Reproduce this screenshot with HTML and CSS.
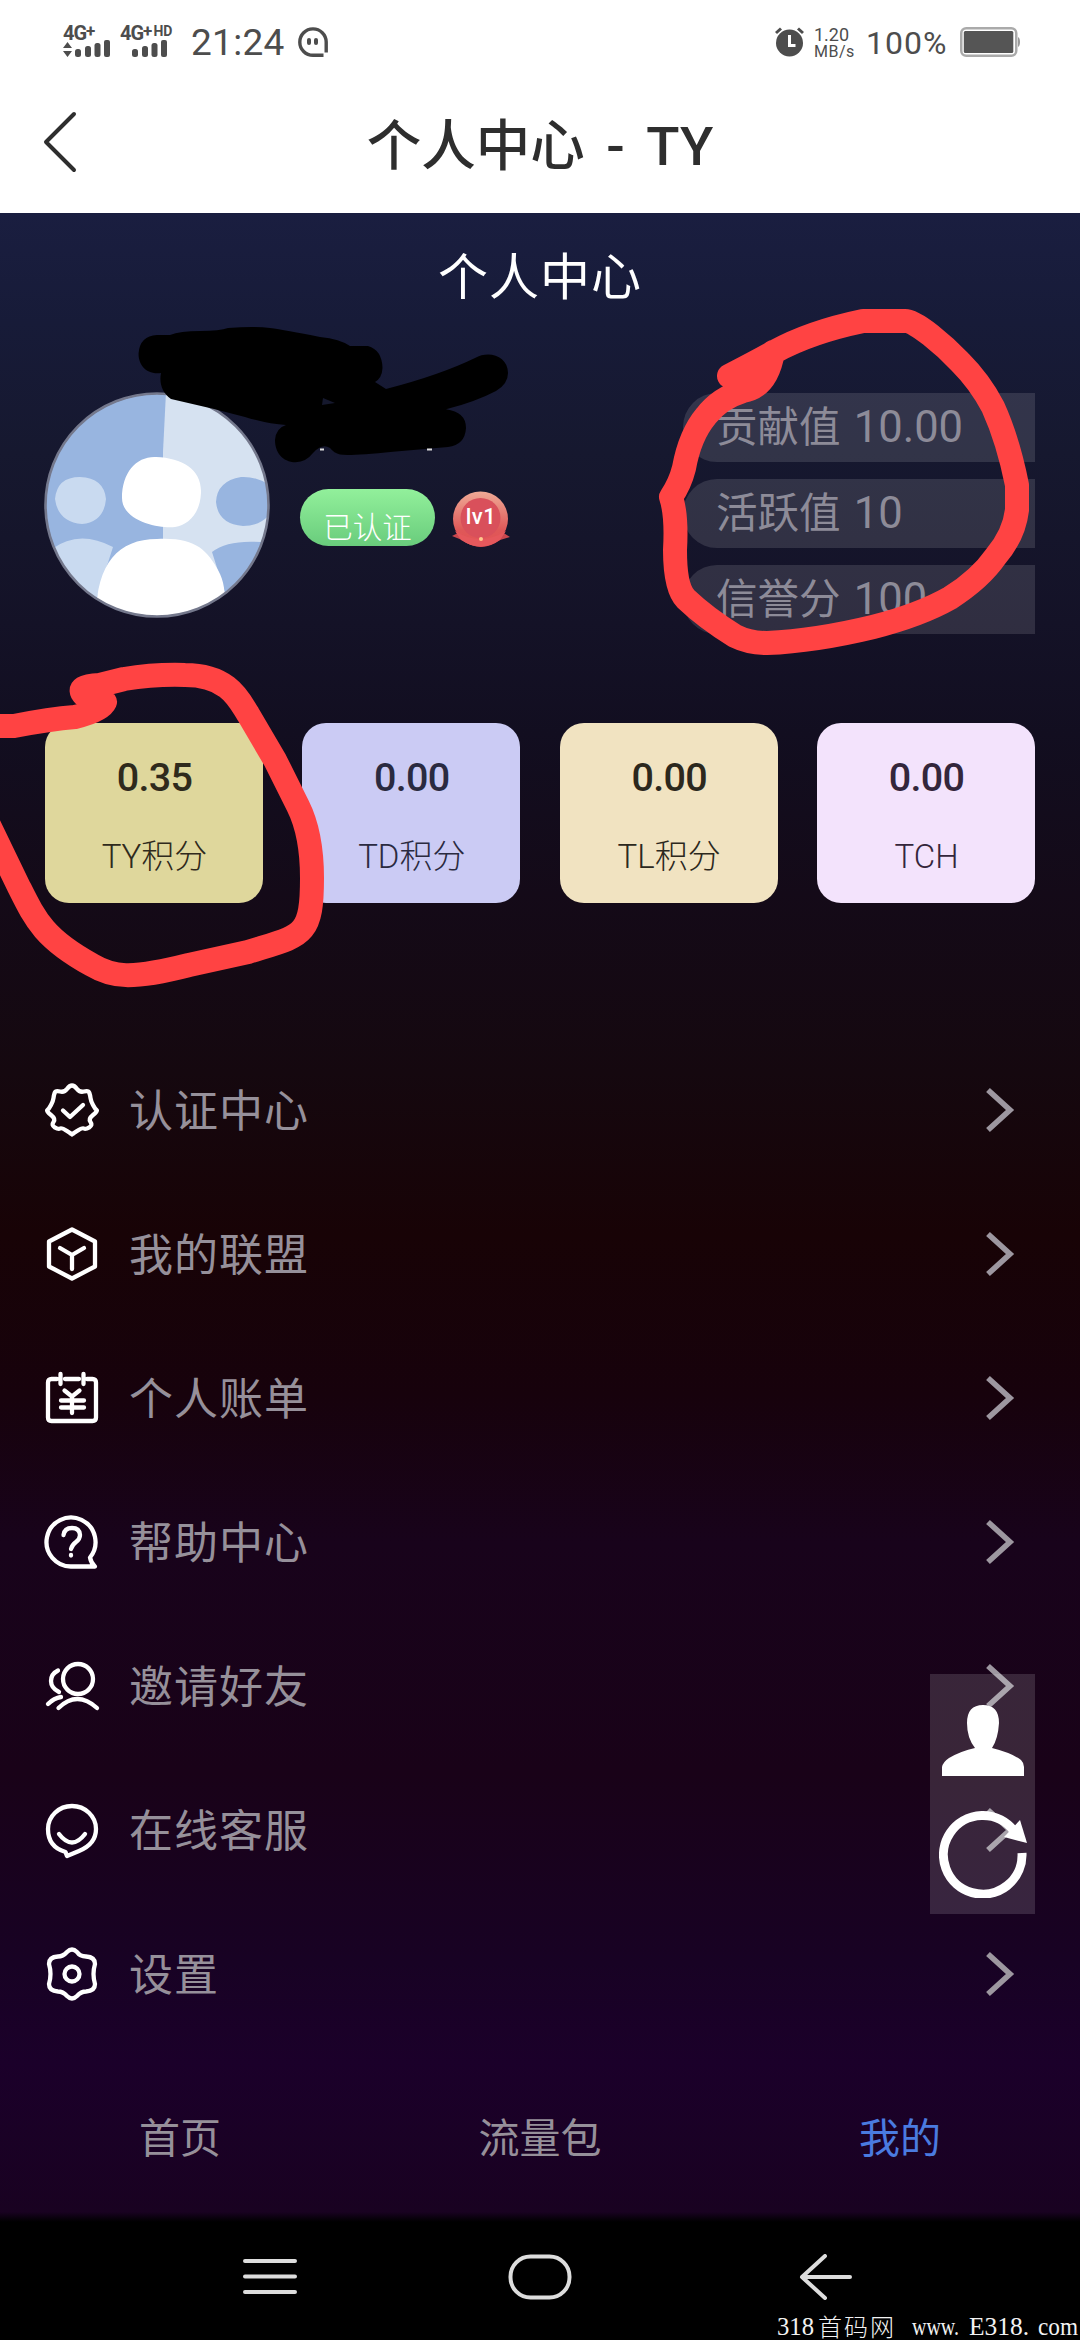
FILE: index.html
```html
<!DOCTYPE html>
<html lang="zh-CN">
<head>
<meta charset="utf-8">
<title>个人中心 - TY</title>
<link rel="stylesheet" href="styles.css">
</head>
<body>
<div class="phone">
  <div class="status">
    <div class="status-left">
      <div class="sim">
        <div class="net">4G<sup>+</sup></div>
        <svg class="bars" width="48" height="18" viewBox="0 0 48 18"><path d="M4.500 2l4.500 6h-9zM4.500 17l4.500-6h-9z"/><rect x="12" y="9" width="6" height="8" rx="2.500"/><rect x="22" y="6" width="6" height="11" rx="2.500"/><rect x="31.500" y="3" width="6" height="14" rx="2.500"/><rect x="41" y="0" width="6" height="17" rx="2"/></svg>
      </div>
      <div class="sim sim-2">
        <div class="net">4G<sup>+</sup><sup class="hd">HD</sup></div>
        <svg class="bars" width="48" height="18" viewBox="0 0 48 18"><rect x="12" y="9" width="6" height="8" rx="2.500"/><rect x="22" y="6" width="6" height="11" rx="2.500"/><rect x="31.500" y="3" width="6" height="14" rx="2.500"/><rect x="41" y="0" width="6" height="17" rx="2"/></svg>
      </div>
      <span class="time">21:24</span>
      <svg class="ghost" width="30" height="30" viewBox="0 0 30 30"><path d="M25.500 28.300H15A13.200 13.200 0 1 1 28.200 15v10.500" fill="none" stroke="#4d4d4d" stroke-width="3.400"/><rect x="9" y="11" width="4" height="7" rx="2" fill="#4d4d4d"/><rect x="16" y="11" width="4" height="7" rx="2" fill="#4d4d4d"/></svg>
    </div>
    <div class="status-right">
      <svg width="30" height="30" viewBox="0 0 30 30"><circle cx="14.500" cy="16" r="13.500" fill="#4d4d4d"/><path d="M1 6l5-4.500M28 6l-5-4.500" stroke="#4d4d4d" stroke-width="3"/><path d="M14.500 8v10.500h6" fill="none" stroke="#fff" stroke-width="3"/></svg>
      <div class="speed"><span>1.20</span><span class="unit">MB/s</span></div>
      <span class="pct">100%</span>
      <svg width="60" height="30" viewBox="0 0 60 30"><rect x="1.250" y="1.250" width="55" height="27.500" rx="5" fill="none" stroke="#aaa" stroke-width="2.500"/><rect x="3.800" y="4" width="49.500" height="22" rx="1.500" fill="#555"/><path d="M58 10q2 1 2 5t-2 5z" fill="#999"/></svg>
    </div>
  </div>
  <header class="header">
    <svg class="back" width="36" height="64" viewBox="0 0 36 64"><path d="M32 4L4 32l28 28" fill="none" stroke="#2e2e2e" stroke-width="4" stroke-linecap="round" stroke-linejoin="round"/></svg>
    <h1>个人中心 - TY</h1>
  </header>
  <main class="page">
    <h2>个人中心</h2>
    <section class="profile">
      <svg class="avatar" width="226" height="226" viewBox="0 0 226 226">
        <defs><clipPath id="face"><circle cx="113" cy="113" r="111"/></clipPath></defs>
        <g clip-path="url(#face)">
          <path fill="#98b5e0" d="M0 0h226v226H0z"/>
          <path fill="#d6e2f1" d="M122 0h104v226H119V60z"/>
          <path fill="#98b5e0" d="M172 110q1-21 25-25 16-1 29 9v28q-10 12-27 12-25-2-27-24zM168 160q18-14 58-9v50h-45z"/>
          <path fill="#c9daf0" d="M11 107q2-22 25-22 24 1 26 22-2 23-24 25-24-2-27-25zM8 157q27-20 61-2l-16 50-34-8z"/>
          <path fill="#fff" d="M78 106C78 80 93 64 112 65 139 66 158 78 157 101 156 122 144 133 131 135 118 137 78 130 78 106zM52 226C52 172 74 147 113 147 151 145 163 158 174 178 182 192 181 206 181 226z"/>
        </g>
        <circle cx="113" cy="113" r="111.500" fill="none" stroke="#74788c" stroke-width="2.600"/>
      </svg>
      <div class="badges">
        <span class="verified">已认证</span>
        <div class="level">
          <svg width="58" height="56" viewBox="0 0 58 56">
            <defs><linearGradient id="lv" x2="0" y2="1"><stop offset="0" stop-color="#efaa96"/><stop offset=".7" stop-color="#df5858"/><stop offset="1" stop-color="#e35156"/></linearGradient></defs>
            <path d="M0 45l8-4h42l8 5-10 3q-19 14-38 0z" fill="#c9474e"/><circle cx="28.500" cy="28" r="27.500" fill="url(#lv)"/><circle cx="28.500" cy="27" r="20" fill="#d9505b"/><path d="M3 40q25 16 51 0l-6 9q-19 13-39 0z" fill="#e5585c"/><circle cx="29" cy="48" r="2" fill="#ffc98e"/>
          </svg>
          <b>lv1</b>
        </div>
      </div>
      <div class="stats">
        <div>贡献值 <span>10.00</span></div>
        <div>活跃值 <span>10</span></div>
        <div>信誉分 <span>100</span></div>
      </div>
    </section>
    <section class="cards">
      <div class="card ty"><b>0.35</b><span>TY积分</span></div>
      <div class="card td"><b>0.00</b><span>TD积分</span></div>
      <div class="card tl"><b>0.00</b><span>TL积分</span></div>
      <div class="card tch"><b>0.00</b><span>TCH</span></div>
    </section>
    <nav class="menu">
      <a><svg class="icon" viewBox="0 0 54 54"><path d="M27 2.500Q29.500 2.500 32 6T39 8.500 44.300 9.700 45.500 15 48 22 51.500 27 48 32 45.500 39 44.300 44.300 39 45.500 32 48 27 51.500 22 48 15 45.500 9.700 44.300 8.500 39 6 32 2.500 27 6 22 8.500 15 9.700 9.700 15 8.500 22 6 27 2.500z"/><path d="M18 27.500l7 6.500 13-12"/></svg><span>认证中心</span><svg class="arrow" viewBox="0 0 28 44"><path d="M2 2l22 20L2 42"/></svg></a>
      <a><svg class="icon" viewBox="0 0 54 54"><path d="M27 2.500L50 14.500v25L27 51.500 4 39.500v-25z"/><path d="M15 21l12 7 12-7M27 28v14"/></svg><span>我的联盟</span><svg class="arrow" viewBox="0 0 28 44"><path d="M2 2l22 20L2 42"/></svg></a>
      <a><svg class="icon" viewBox="0 0 54 54"><path d="M12 8H6.500Q3 8 3 11.500v35Q3 50 6.500 50h41q3.500 0 3.500-3.500v-35Q51 8 47.500 8H42M20 8h14M15.500 3v10M38.500 3v10"/><path d="M19.500 19.500l7.500 6 7.500-6M16 29.500h23M16 36.500h23M27 26v16"/></svg><span>个人账单</span><svg class="arrow" viewBox="0 0 28 44"><path d="M2 2l22 20L2 42"/></svg></a>
      <a><svg class="icon" viewBox="0 0 54 54"><path d="M45 42.500A24.500 24.500 0 1 0 27 51.500H50Q46 48 45 42.500z"/><path d="M18.500 20Q19.500 13 27 13t8 7q0 4-4 7t-5 7M26 40v.5"/></svg><span>帮助中心</span><svg class="arrow" viewBox="0 0 28 44"><path d="M2 2l22 20L2 42"/></svg></a>
      <a><svg class="icon" viewBox="0 0 54 54"><circle cx="33" cy="20" r="15"/><path d="M13.500 49Q32 31 52 49M13 11.500Q6 15 6 22q0 7 8 11M3 45q6-6 13-7"/></svg><span>邀请好友</span><svg class="arrow" viewBox="0 0 28 44"><path d="M2 2l22 20L2 42"/></svg></a>
      <a><svg class="icon" viewBox="0 0 54 54"><path d="M20.500 49Q3 44 3 26A24 23 0 0 1 51 26Q51 41 34 48L22 53z"/><path d="M14 31q13 17 26 0"/></svg><span>在线客服</span><svg class="arrow" viewBox="0 0 28 44"><path d="M2 2l22 20L2 42"/></svg></a>
      <a><svg class="icon" viewBox="0 0 54 54"><path d="M22 5Q27 0 32 5 35 9.500 41 9.500 50 10 50 17 47 27 50 37 50 44 41 44.500 36 44.500 32 49 27 54 22 49 18 44.500 13 44.500 4 44 4 37 7 27 4 17 4 10 13 9.500 18 9.500 22 5z"/><circle cx="27" cy="27" r="7.500"/></svg><span>设置</span><svg class="arrow" viewBox="0 0 28 44"><path d="M2 2l22 20L2 42"/></svg></a>
    </nav>
    <nav class="tabs"><a>首页</a><a>流量包</a><a class="active">我的</a></nav>
  </main>
  <div class="sysnav">
    <svg viewBox="0 0 54 46"><path d="M2 7h50M2 22.500h50M2 38h50"/></svg>
    <svg class="home" viewBox="0 0 64 46"><rect x="2.500" y="2.500" width="59" height="41" rx="20"/></svg>
    <svg viewBox="0 0 54 46"><path d="M26 2L3 23l23 21M3 23h48"/></svg>
  </div>

  <div class="float">
    <svg width="82" height="71" viewBox="0 0 82 71"><path fill="#fff" d="M41 0Q57 0 57 18 56 34 50 43 70 48 79 55 82 58 82 62v9H0v-9q1-5 7-9 12-7 26-10Q25 33 25 18 25 0 41 0z"/></svg>
    <svg width="88" height="88" viewBox="0 0 88 88"><path d="M83 43A39.300 39.300 0 1 1 75 21" fill="none" stroke="#fff" stroke-width="9"/><path d="M81 10l7 23-23-6z" fill="#fff"/></svg>
  </div>
  <svg class="marks" viewBox="0 0 1080 2340">
    <path fill="#000" d="M138.600 353Q140 336 157 335L170 335Q180 331 200 331T228 328Q255 326 270 328T320 337Q340 339 350 346H368Q382 350 382.500 368 382 378 375 382L386 389Q440 375 475 358C489 350 508 356 508 373Q508 384 496 391 475 402 446 409.300 466 412 466 428 465 445 448 447L393 451.700Q350 456 340 454.500 334 453 330 448 322 443 313 453 306 462 295.700 462.300C282 462 275 452 275 440Q276 428 286 425 268 424 245 417L214 409 171 399C162 393 159 383 161 373 145 375 138 363 138.600 353z"/>
    <path fill="#15182d" d="M323 398l-1 7 13-2z"/>
    <path d="M320 449.500h4M427 449.500h5" stroke="#ddd" stroke-width="2"/>
    <path class="red" d="M729 376Q760 360 774 352 810 332 863 321L905 321C915 320 945 346 960 362Q980 382 993 407 1008 440 1017 485V510Q1014 535 996 556 980 579 950 598 920 615 873 627 815 641 767 643 749 643 735 636 706 618 686 599 675 588 675 550 677 515 671 497 680 484 684 468 690 435 706 416 720 398 743 391 767 387 773 352M735 378l20-8"/>
    <path class="red" d="M-12 726H14Q50 719 75 717 101 711 105 702 100 695 84 695 75 686 100 685L124 679Q155 674 185 675C230 675 240 702 248 714L275 760 298 806Q312 834 312 878C312 938 302 935 248 952L189 965C130 980 112 977 92 965 43 938 35 919 18 885L-12 823"/>
  </svg>
  <svg class="watermark" width="304" height="40" viewBox="0 0 304 40">
    <text x="1" y="35" textLength="37" lengthAdjust="spacingAndGlyphs">318</text><text class="cjk" x="42" y="36" textLength="76">首码网</text><text x="136" y="35" textLength="47" lengthAdjust="spacingAndGlyphs">www.</text><text x="193" y="35" textLength="60" lengthAdjust="spacingAndGlyphs">E318.</text><text x="262" y="35" textLength="40" lengthAdjust="spacingAndGlyphs">com</text>
  </svg>
</div>
</body>
</html>
```
FILE: styles.css
```css
* { box-sizing: border-box; }
body { margin: 0; background: #000; font-family: Roboto, "Noto Sans CJK SC", sans-serif; }
h1, h2 { margin: 0; }
.phone { position: relative; width: 1080px; height: 2340px; overflow: hidden; display: flex; flex-direction: column; }

.status { height: 82px; flex: none; background: #fff; color: #4d4d4d; display: flex; justify-content: space-between; padding: 24px 60px 0 63px; }
.status-left, .status-right { display: flex; align-items: flex-start; }
.sim { width: 57px; height: 34px; display: flex; flex-direction: column; }
.sim-2 { width: 71px; }
.net { height: 16px; font-size: 20px; line-height: 18px; font-weight: 700; letter-spacing: -1px; white-space: nowrap; }
.net sup { font-size: 17px; line-height: 0; vertical-align: 3px; }
.net .hd { font-size: 14px; letter-spacing: 0; margin-left: 2px; vertical-align: 4px; }
.bars { fill: #4d4d4d; flex: none; }
.time { font-size: 37px; line-height: 37px; width: 107px; letter-spacing: .3px; }
.ghost { margin-top: 3px; }
.status-right { gap: 9px; padding-top: 3px; }
.speed { width: 43px; display: flex; flex-direction: column; font-size: 18px; line-height: 16px; }
.speed .unit { font-size: 16px; line-height: 17px; letter-spacing: .5px; }
.pct { font-size: 32px; line-height: 33px; letter-spacing: 1px; width: 85px; }

.header { height: 131px; flex: none; background: #fff; display: grid; grid-template-columns: 80px 1fr 80px; padding: 0 42px; }
.back { margin-top: 28px; }
.header h1 { text-align: center; font-size: 54.500px; line-height: 129px; font-weight: 500; color: #2e2e2e; white-space: nowrap; word-spacing: 8px; }

.page { height: 1999px; flex: none; display: flex; flex-direction: column; color: #96909a;
  background: linear-gradient(#1a1e40 0, #171b38 110px, #16182f 240px, #141227 410px, #120e20 520px, #140a18 680px, #15080f 860px, #180306 1020px, #17020c 1180px, #18031b 1330px, #190218 1560px, #180224 1750px, #1b002a 1850px, #190221 1999px); }
.page h2 { height: 180px; padding-top: 29px; text-align: center; color: #fff; font-weight: 400; font-size: 50px; line-height: 72px; letter-spacing: 1px; }
.profile { height: 330px; display: flex; padding: 0 45px 0 44px; }
.avatar { flex: none; margin-top: -1px; }
.badges { display: flex; gap: 17px; padding: 96px 0 0 30px; }
.verified { width: 135px; height: 57px; border-radius: 29px; background: linear-gradient(#92f09b, #69cc7c); color: #fff; font-size: 29.500px; font-weight: 300; line-height: 78px; text-align: center; overflow: hidden; }
.level { width: 58px; height: 56px; margin-top: 2px; display: grid; }
.level > * { grid-area: 1 / 1; }
.level b { color: #fff; font-size: 22px; line-height: 51px; text-align: center; font-weight: 500; letter-spacing: .5px; }
.stats { margin-left: auto; width: 352px; display: flex; flex-direction: column; gap: 17px; }
.stats div { height: 69px; flex: none; border-radius: 34px 0 0 34px; background: rgba(255, 255, 255, .12); padding-left: 33px; font-size: 41.500px; line-height: 69px; color: #8d8b98; white-space: pre; }
.stats span { font-size: 43.500px; margin-left: 3px; }

.cards { height: 315px; display: grid; grid-template-columns: repeat(4, 218px); justify-content: space-between; padding: 0 45px; }
.card { height: 180px; border-radius: 24px; display: flex; flex-direction: column; align-items: center; padding: 31px 0 0 1px; }
.card b { font-size: 39.500px; line-height: 48px; font-weight: 500; letter-spacing: -.7px; }
.card span { font-size: 33px; line-height: 40px; margin-top: 35px; font-weight: 300; }
.ty { background: #dfd79c; color: #2f2a1c; }
.td { background: #cbcbf4; color: #2a2a40; }
.tl { background: #f1e3c1; color: #2c281d; }
.tch { background: #f3e3fc; color: #33263b; }

.menu { display: flex; flex-direction: column; }
.menu a { height: 144px; display: flex; align-items: center; padding: 0 66px 0 45px; font-size: 44px; letter-spacing: 1px; }
.menu span { margin-left: 30px; flex: 1; padding-bottom: 4px; }
.icon { width: 54px; height: 54px; fill: none; stroke: #fff; stroke-width: 4.300; stroke-linecap: round; stroke-linejoin: round; overflow: visible; }
.arrow { width: 28px; height: 44px; fill: none; stroke: #9d97a0; stroke-width: 5.600; overflow: visible; }
.tabs { flex: 1; display: grid; grid-template-columns: repeat(3, 1fr); text-align: center; font-size: 41px; line-height: 60px; padding-top: 63px; }
.tabs .active { color: #4a7be0; }

.sysnav { flex: 1; background: linear-gradient(#190221, #000 10px); display: flex; align-items: flex-start; padding: 42px 0 0 243px; }
.sysnav svg { width: 54px; height: 46px; fill: none; stroke: #ddd; stroke-width: 4; stroke-linecap: round; stroke-linejoin: round; }
.sysnav .home { width: 64px; margin: 0 227px 0 211px; }

.float { position: absolute; left: 930px; top: 1674px; width: 105px; height: 240px; background: rgba(255, 255, 255, .14); display: flex; flex-direction: column; align-items: center; gap: 34px; padding-top: 31px; }
.marks { position: absolute; inset: 0; width: 1080px; height: 2340px; pointer-events: none; }
.red { fill: none; stroke: #ff4343; stroke-width: 24; stroke-linecap: round; stroke-linejoin: round; }
.watermark { position: absolute; right: 0; bottom: 0; fill: #f2f2f2; font: 25px "Liberation Serif", serif; }
.watermark .cjk { font-family: "Noto Sans CJK SC", sans-serif; font-size: 24px; font-weight: 300; }
```
